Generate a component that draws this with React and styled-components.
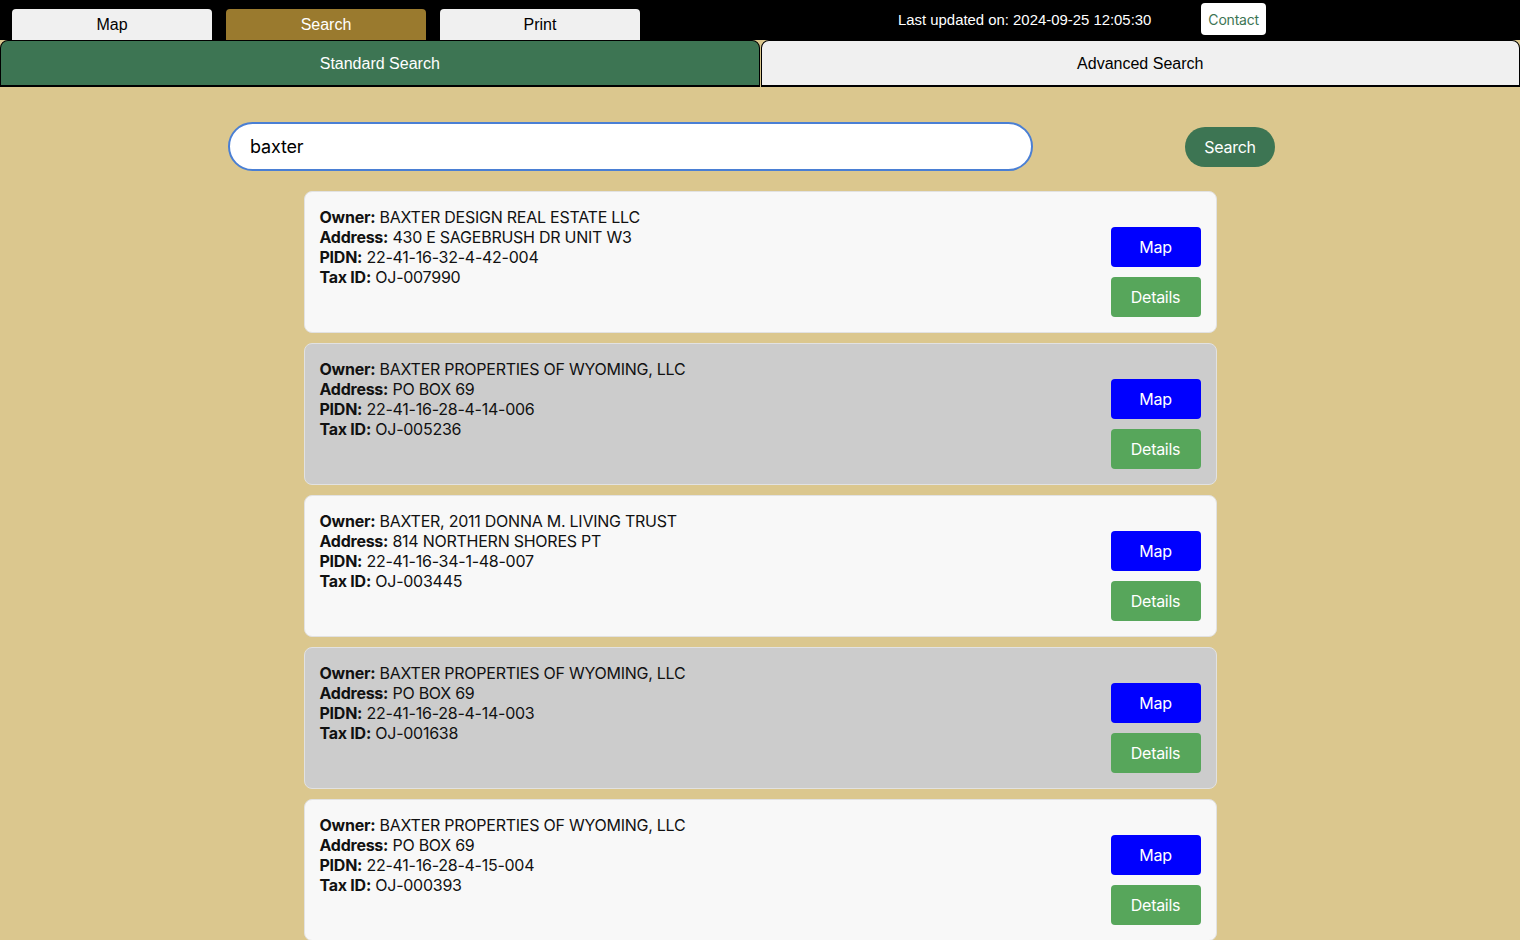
import React, { useState } from "react";
import styled, { createGlobalStyle } from "styled-components";

const GlobalStyle = createGlobalStyle`
    html, body {
        margin: 0;
        padding: 0;
        background-color: #dbc78e;
        font-family: Inter, "Noto Sans", sans-serif;
    }
`

const TopBar = styled.div`
    display: flex;
    align-items: flex-end;
    height: 40px;
    background-color: #000;
`

const NavGroup = styled.div`
    display: flex;
    gap: 14px;
    padding-left: 12px;
    align-self: flex-end;
`

const NavButton = styled.button`
    width: 200px;
    height: 31px;
    border: none;
    border-radius: 4px 4px 0 0;
    font-family: "Liberation Sans", Arial, sans-serif;
    font-size: 16px;
    padding: 0;
    cursor: pointer;
    background-color: ${props => props.active ? '#9a7a2e' : '#f0f0f0'};
    color: ${props => props.active ? '#fff' : '#000'};
`

const Updated = styled.div`
    color: #fff;
    font-family: "Liberation Sans", Arial, sans-serif;
    font-size: 14.9px;
    margin-left: 258px;
    align-self: center;
`

const ContactButton = styled.button`
    margin-left: 50px;
    align-self: flex-start;
    margin-top: 3px;
    height: 32px;
    padding: 0 7px;
    border: none;
    border-radius: 4px;
    background-color: #fff;
    color: #3d7553;
    font-family: Inter, sans-serif;
    font-size: 14px;
    letter-spacing: -0.2px;
    cursor: pointer;
`

const TabRow = styled.div`
    display: flex;
    gap: 1px;
    background-color: #dbc78e;
`

const Tab = styled.button`
    flex: 1;
    height: 47px;
    border: 1px solid #000;
    border-bottom: 2px solid #000;
    border-radius: 8px 8px 0 0;
    font-family: "Liberation Sans", Arial, sans-serif;
    font-size: 16px;
    padding: 2px 0 0;
    cursor: pointer;
    background-color: ${props => props.active ? '#3d7553' : '#f0f0f0'};
    color: ${props => props.active ? '#fff' : '#000'};
`

const Main = styled.div`
    padding: 35px 0 40px;
`

const SearchRow = styled.div`
    display: flex;
    align-items: center;
    padding-left: 228px;
    gap: 152px;
    margin-bottom: 20px;
`

const SearchInput = styled.input`
    box-sizing: border-box;
    width: 805px;
    height: 49px;
    border: 2px solid #4a7fd4;
    border-radius: 25px;
    padding: 0 20px;
    font-family: Inter, sans-serif;
    font-size: 18px;
    letter-spacing: -0.2px;
    color: #000;
    outline: none;
    background: #fff;
`

const SearchButton = styled.button`
    width: 90px;
    height: 40px;
    border: none;
    border-radius: 20px;
    background-color: #3d7553;
    color: #fff;
    font-family: Inter, sans-serif;
    font-size: 16px;
    letter-spacing: -0.3px;
    cursor: pointer;
`

const ResultList = styled.div`
    width: 913px;
    margin: 0 auto;
    display: flex;
    flex-direction: column;
    gap: 10px;
`

const Card = styled.div`
    display: flex;
    justify-content: space-between;
    padding: 15px;
    border: 1px solid #e2e2e2;
    border-radius: 8px;
    background-color: ${props => props.shaded ? '#cccccc' : '#f8f8f8'};
`

const Info = styled.div`
    font-family: Inter, sans-serif;
    font-size: 16px;
    line-height: 20px;
    letter-spacing: -0.25px;
    color: #111;
`

const Line = styled.div`
    b {
        font-weight: 700;
    }
`

const Actions = styled.div`
    display: flex;
    flex-direction: column;
    gap: 10px;
    padding-top: 20px;
`

const ActionButton = styled.button`
    width: 90px;
    height: 40px;
    border: none;
    border-radius: 4px;
    font-family: Inter, sans-serif;
    font-size: 16px;
    letter-spacing: -0.3px;
    color: #fff;
    cursor: pointer;
    background-color: ${props => props.variant === 'map' ? '#0000ff' : '#57a65b'};
`

const results = [
    { owner: "BAXTER DESIGN REAL ESTATE LLC", address: "430 E SAGEBRUSH DR UNIT W3", pidn: "22-41-16-32-4-42-004", taxId: "OJ-007990" },
    { owner: "BAXTER PROPERTIES OF WYOMING, LLC", address: "PO BOX 69", pidn: "22-41-16-28-4-14-006", taxId: "OJ-005236" },
    { owner: "BAXTER, 2011 DONNA M. LIVING TRUST", address: "814 NORTHERN SHORES PT", pidn: "22-41-16-34-1-48-007", taxId: "OJ-003445" },
    { owner: "BAXTER PROPERTIES OF WYOMING, LLC", address: "PO BOX 69", pidn: "22-41-16-28-4-14-003", taxId: "OJ-001638" },
    { owner: "BAXTER PROPERTIES OF WYOMING, LLC", address: "PO BOX 69", pidn: "22-41-16-28-4-15-004", taxId: "OJ-000393" },
];

const App = () => {
    const [query, setQuery] = useState("baxter");
    const [tab, setTab] = useState("standard");

    return (
        <>
            <GlobalStyle />
            <TopBar>
                <NavGroup>
                    <NavButton>Map</NavButton>
                    <NavButton active>Search</NavButton>
                    <NavButton>Print</NavButton>
                </NavGroup>
                <Updated>Last updated on: 2024-09-25 12:05:30</Updated>
                <ContactButton>Contact</ContactButton>
            </TopBar>
            <TabRow>
                <Tab active={tab === "standard"} onClick={() => setTab("standard")}>Standard Search</Tab>
                <Tab active={tab === "advanced"} onClick={() => setTab("advanced")}>Advanced Search</Tab>
            </TabRow>
            <Main>
                <SearchRow>
                    <SearchInput value={query} onChange={e => setQuery(e.target.value)} />
                    <SearchButton>Search</SearchButton>
                </SearchRow>
                <ResultList>
                    {results.map((r, i) => (
                        <Card key={r.taxId} shaded={i % 2 === 1}>
                            <Info>
                                <Line><b>Owner:</b> {r.owner}</Line>
                                <Line><b>Address:</b> {r.address}</Line>
                                <Line><b>PIDN:</b> {r.pidn}</Line>
                                <Line><b>Tax ID:</b> {r.taxId}</Line>
                            </Info>
                            <Actions>
                                <ActionButton variant="map">Map</ActionButton>
                                <ActionButton>Details</ActionButton>
                            </Actions>
                        </Card>
                    ))}
                </ResultList>
            </Main>
        </>
    )
}

export default App;
